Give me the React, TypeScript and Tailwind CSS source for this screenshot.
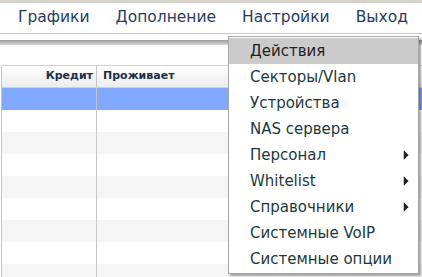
import { VscTriangleRight } from 'react-icons/vsc'

const navItems = ['Графики', 'Дополнение', 'Настройки', 'Выход']

const menuItems: { label: string; sub?: boolean }[] = [
  { label: 'Действия' },
  { label: 'Секторы/Vlan' },
  { label: 'Устройства' },
  { label: 'NAS сервера' },
  { label: 'Персонал', sub: true },
  { label: 'Whitelist', sub: true },
  { label: 'Справочники', sub: true },
  { label: 'Системные VoIP' },
  { label: 'Системные опции' },
]

const rows = Array.from({ length: 8 })

export default function App() {
  return (
    <div className="relative w-[422px] h-[277px] overflow-hidden bg-white font-['DejaVu_Sans',sans-serif]">
      <div className="h-[3px] bg-[#d6d3cc]" />
      <nav className="flex h-[31px] items-center border-b border-[#c8c8c8] pl-[18px] text-[15.5px] text-[#1f3d63]">
        {navItems.map((item) => (
          <span key={item} className="mr-[26px] leading-none">
            {item}
          </span>
        ))}
      </nav>
      <div className="h-[6px]" />
      <div className="h-[5px] bg-gradient-to-b from-[#9a9a9a] to-[#d9d9d9]" />
      <div className="h-[20px]" />

      <div className="border-l border-[#c4c4c4] ml-[1px]">
        <div className="flex h-[23px] border-y border-[#d0d0d0] bg-gradient-to-b from-white to-[#ececec] text-[11px] font-bold text-[#1b2f45]">
          <div className="flex w-[95px] items-center justify-end border-r border-[#c4c4c4] pr-[3px]">Кредит</div>
          <div className="flex flex-1 items-center pl-[6px]">Проживает</div>
        </div>
        <div className="flex h-[22px] bg-[#80a8ff]">
          <div className="w-[95px] border-r border-[#c4c4c4]" />
        </div>
        {rows.map((_, i) => (
          <div key={i} className={`flex h-[22px] ${i % 2 === 0 ? 'bg-white' : 'bg-[#f5f5f5]'}`}>
            <div className="w-[95px] border-r border-[#c4c4c4]" />
          </div>
        ))}
      </div>

      <div className="absolute left-[228px] top-[36px] w-[191px] border border-[#a8a8a8] bg-white py-[1px] shadow-[2px_2px_2px_rgba(0,0,0,0.35)]">
        {menuItems.map((m, i) => (
          <div
            key={m.label}
            className={`flex h-[26px] items-center pl-[21px] pr-[6px] text-[15px] text-[#1a3a40] ${i === 0 ? 'bg-[#cbcbcb] text-[#222]' : ''}`}
          >
            <span className="flex-1">{m.label}</span>
            {m.sub && <VscTriangleRight className="text-[#222]" size={12} />}
          </div>
        ))}
      </div>
    </div>
  )
}
